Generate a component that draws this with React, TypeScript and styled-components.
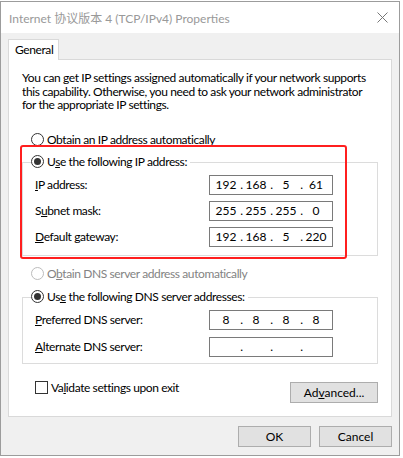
import React from "react";
import styled, { createGlobalStyle } from "styled-components";

const GlobalStyle = createGlobalStyle`
  body {
    margin: 0;
    background: #ffffff;
    font-family: Lato, "Noto Sans CJK SC", sans-serif;
    font-size: 12px;
    letter-spacing: -0.4px;
    color: #000;
  }
  * {
    box-sizing: border-box;
  }
`;

const ipRows = [
  { label: "IP address:", key: "I", rest: "P address:", value: ["192", "168", "5", "61"] },
  { label: "Subnet mask:", key: "", pre: "S", mid: "u", rest: "bnet mask:", value: ["255", "255", "255", "0"] },
  { label: "Default gateway:", key: "D", rest: "efault gateway:", value: ["192", "168", "5", "220"] },
];

const IpField: React.FC<{ value: string[] }> = ({ value }) => (
  <Field>
    {value.map((part, i) => (
      <React.Fragment key={i}>
        <Octet>{part}</Octet>
        {i < 3 && <Dot>.</Dot>}
      </React.Fragment>
    ))}
  </Field>
);

const App: React.FC = () => {
  return (
    <>
      <GlobalStyle />
      <Window>
        <TitleBar>
          <Title>Internet 协议版本 4 (TCP/IPv4) Properties</Title>
          <svg width="11" height="11" viewBox="0 0 11 11">
            <path d="M0.5 0.5 L10.5 10.5 M10.5 0.5 L0.5 10.5" stroke="#777" strokeWidth="1" />
          </svg>
        </TitleBar>

        <Body>
          <Tab>General</Tab>
          <Panel>
            <Intro>
              You can get IP settings assigned automatically if your network supports
              <br />
              this capability. Otherwise, you need to ask your network administrator
              <br />
              for the appropriate IP settings.
            </Intro>

            <RadioRow $top={21} $indent={9}>
              <Radio />
              <RadioText>
                <u>O</u>btain an IP address automatically
              </RadioText>
            </RadioRow>

            <GroupBox $top={15} $gap={6} $bottom={8}>
              <Legend $after={0}>
                <Radio $checked />
                <RadioText>
                  U<u>s</u>e the following IP address:
                </RadioText>
              </Legend>
              {ipRows.map((row) => (
                <FieldRow key={row.label}>
                  <Label>
                    {row.key ? (
                      <>
                        <u>{row.key}</u>
                        {row.rest}
                      </>
                    ) : (
                      <>
                        {row.pre}
                        <u>{row.mid}</u>
                        {row.rest}
                      </>
                    )}
                  </Label>
                  <IpField value={row.value} />
                </FieldRow>
              ))}
            </GroupBox>

            <RadioRow $top={11} $indent={9}>
              <Radio $disabled />
              <RadioText $disabled>
                O<u>b</u>tain DNS server address automatically
              </RadioText>
            </RadioRow>

            <GroupBox $top={16} $gap={7} $bottom={6}>
              <Legend $after={-1}>
                <Radio $checked />
                <RadioText>
                  Us<u>e</u> the following DNS server addresses:
                </RadioText>
              </Legend>
              <FieldRow>
                <Label>
                  <u>P</u>referred DNS server:
                </Label>
                <IpField value={["8", "8", "8", "8"]} />
              </FieldRow>
              <FieldRow>
                <Label>
                  <u>A</u>lternate DNS server:
                </Label>
                <IpField value={["", "", "", ""]} />
              </FieldRow>
            </GroupBox>

            <OptionsRow>
              <CheckRow>
                <CheckBox />
                <span>
                  Va<u>l</u>idate settings upon exit
                </span>
              </CheckRow>
              <Button $width={88}>
                Ad<u>v</u>anced...
              </Button>
            </OptionsRow>

            <Highlight />
          </Panel>

          <Actions>
            <Button $width={73}>OK</Button>
            <Button $width={73}>Cancel</Button>
          </Actions>
        </Body>
      </Window>
    </>
  );
};

export default App;

// Styled Components
const Window = styled.div`
  margin-top: 1px;
  width: 400px;
  height: 455px;
  border: 1px solid #9c9c9c;
  background: #f0f0f0;
  display: flex;
  flex-direction: column;
`;

const TitleBar = styled.div`
  height: 31px;
  background: #ffffff;
  display: flex;
  align-items: center;
  justify-content: space-between;
  padding: 0 11px 0 8px;
`;

const Title = styled.div`
  color: #999999;
  font-size: 12px;
  letter-spacing: 0;
  white-space: nowrap;
`;

const Body = styled.div`
  padding: 6px 7px 0 7px;
  display: flex;
  flex-direction: column;
`;

const Tab = styled.div`
  position: relative;
  z-index: 1;
  width: 51px;
  height: 21px;
  margin-bottom: -1px;
  padding-left: 6px;
  line-height: 20px;
  background: #ffffff;
  border: 1px solid #d9d9d9;
  border-bottom: none;
`;

const Panel = styled.div`
  position: relative;
  height: 358px;
  background: #ffffff;
  border: 1px solid #d9d9d9;
  padding: 11px 13px 0 13px;
`;

const Intro = styled.div`
  line-height: 13.5px;
  white-space: nowrap;
`;

const RadioRow = styled.div<{ $top: number; $indent: number }>`
  display: flex;
  align-items: center;
  height: 14px;
  margin-top: ${(p) => p.$top}px;
  padding-left: ${(p) => p.$indent}px;
`;

const Radio = styled.span<{ $checked?: boolean; $disabled?: boolean }>`
  position: relative;
  width: 13px;
  height: 13px;
  flex: none;
  border-radius: 50%;
  border: 1px solid ${(p) => (p.$disabled ? "#bcbcbc" : "#333333")};
  background: #ffffff;

  &::after {
    content: "";
    display: ${(p) => (p.$checked ? "block" : "none")};
    position: absolute;
    left: 2px;
    top: 2px;
    width: 7px;
    height: 7px;
    border-radius: 50%;
    background: #333333;
  }
`;

const RadioText = styled.span<{ $disabled?: boolean }>`
  margin-left: 3px;
  white-space: nowrap;
  color: ${(p) => (p.$disabled ? "#838383" : "#000000")};
`;

const GroupBox = styled.div<{ $top: number; $gap: number; $bottom: number }>`
  margin-top: ${(p) => p.$top}px;
  border: 1px solid #dcdcdc;
  padding: 0 44px ${(p) => p.$bottom}px 12px;
  display: flex;
  flex-direction: column;
  gap: ${(p) => p.$gap}px;
`;

const Legend = styled.div<{ $after: number }>`
  display: flex;
  align-items: center;
  align-self: flex-start;
  height: 14px;
  margin: -8px 0 ${(p) => p.$after}px -4px;
  padding-right: 3px;
  background: #ffffff;
`;

const FieldRow = styled.div`
  display: flex;
  align-items: center;
  justify-content: space-between;
  height: 20px;
`;

const Label = styled.span`
  white-space: nowrap;
`;

const Field = styled.div`
  width: 124px;
  height: 20px;
  border: 1px solid #7a7a7a;
  padding-left: 3px;
  display: flex;
  align-items: center;
  letter-spacing: 0;
`;

const Octet = styled.span`
  width: 26px;
  text-align: center;
`;

const Dot = styled.span`
  width: 4px;
  text-align: right;
`;

const OptionsRow = styled.div`
  display: flex;
  justify-content: space-between;
  align-items: flex-start;
  margin-top: 17px;
  padding-left: 13px;
`;

const CheckRow = styled.div`
  display: flex;
  align-items: center;
  gap: 3px;
  height: 13px;
`;

const CheckBox = styled.span`
  width: 13px;
  height: 13px;
  border: 1px solid #333333;
  background: #ffffff;
`;

const Button = styled.button<{ $width: number }>`
  width: ${(p) => p.$width}px;
  height: 21px;
  margin-top: 1px;
  padding: 0;
  font: inherit;
  color: #000;
  background: #e1e1e1;
  border: 1px solid #adadad;
`;

const Actions = styled.div`
  display: flex;
  justify-content: flex-end;
  gap: 8px;
  margin-top: 8px;
`;

const Highlight = styled.div`
  position: absolute;
  left: 11px;
  top: 85px;
  width: 327px;
  height: 114px;
  border: 2px solid #ff1f1f;
  border-radius: 3px;
  pointer-events: none;
`;
